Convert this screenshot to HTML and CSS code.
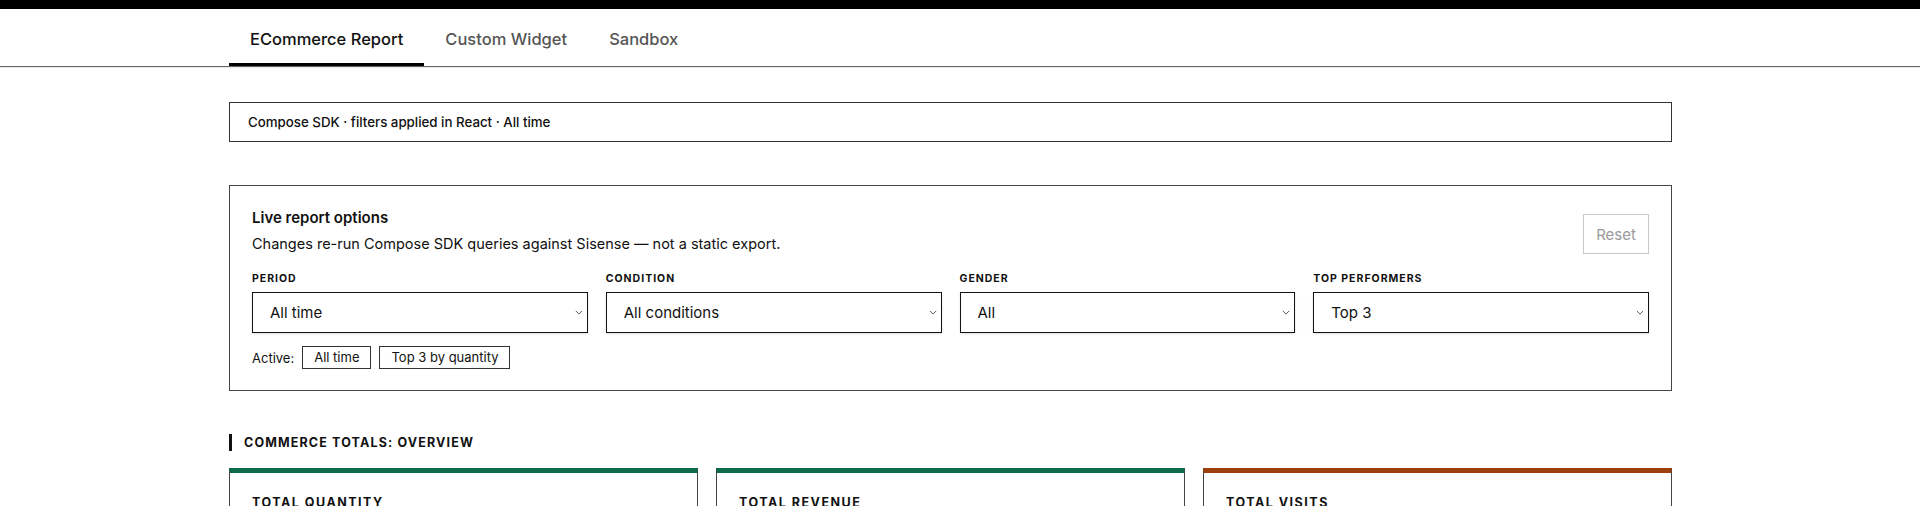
FILE: index.html
```html
<!DOCTYPE html>
<html lang="en">
<head>
    <meta charset="UTF-8">
    <meta name="viewport" content="width=device-width, initial-scale=1.0">
    <title>ECommerce Report</title>
    <link rel="stylesheet" href="styles.css">
</head>
<body>
    <div class="topbar"></div>

    <nav class="tabs">
        <div class="tabs-inner">
            <a class="tab active" href="#">ECommerce Report</a>
            <a class="tab" href="#">Custom Widget</a>
            <a class="tab" href="#">Sandbox</a>
        </div>
    </nav>

    <main class="page">
        <div class="context-bar">Compose SDK · filters applied in React · All time</div>

        <section class="options">
            <div class="options-head">
                <div>
                    <h2 class="options-title">Live report options</h2>
                    <p class="options-sub">Changes re-run Compose SDK queries against Sisense — not a static export.</p>
                </div>
                <button class="reset" disabled>Reset</button>
            </div>

            <div class="filters">
                <label class="field">
                    <span class="field-label">Period</span>
                    <span class="select-wrap">
                        <select>
                            <option>All time</option>
                            <option>Last 12 months</option>
                            <option>Last 30 days</option>
                        </select>
                        <svg class="chevron" viewBox="0 0 10 6"><path d="M1 1l4 4 4-4"/></svg>
                    </span>
                </label>
                <label class="field">
                    <span class="field-label">Condition</span>
                    <span class="select-wrap">
                        <select>
                            <option>All conditions</option>
                            <option>New</option>
                            <option>Used</option>
                        </select>
                        <svg class="chevron" viewBox="0 0 10 6"><path d="M1 1l4 4 4-4"/></svg>
                    </span>
                </label>
                <label class="field">
                    <span class="field-label">Gender</span>
                    <span class="select-wrap">
                        <select>
                            <option>All</option>
                            <option>Female</option>
                            <option>Male</option>
                        </select>
                        <svg class="chevron" viewBox="0 0 10 6"><path d="M1 1l4 4 4-4"/></svg>
                    </span>
                </label>
                <label class="field">
                    <span class="field-label">Top performers</span>
                    <span class="select-wrap">
                        <select>
                            <option>Top 3</option>
                            <option>Top 5</option>
                            <option>Top 10</option>
                        </select>
                        <svg class="chevron" viewBox="0 0 10 6"><path d="M1 1l4 4 4-4"/></svg>
                    </span>
                </label>
            </div>

            <div class="active-row">
                <span>Active:</span>
                <span class="chip">All time</span>
                <span class="chip">Top 3 by quantity</span>
            </div>
        </section>

        <h3 class="section-title">Commerce totals: overview</h3>

        <div class="kpis">
            <div class="kpi green">
                <div class="kpi-label">Total quantity</div>
            </div>
            <div class="kpi green">
                <div class="kpi-label">Total revenue</div>
            </div>
            <div class="kpi brown">
                <div class="kpi-label">Total visits</div>
            </div>
        </div>
    </main>
</body>
</html>
```

FILE: styles.css
```css
body {
    margin: 0;
    font-family: 'Inter', 'Liberation Sans', sans-serif;
    color: #111;
    background: #fff;
}
.topbar {
    height: 9px;
    background: #000;
}
.tabs {
    border-bottom: 1px solid #666;
    box-shadow: 0 1px 1px rgba(0, 0, 0, 0.08);
}
.tabs-inner {
    display: flex;
    margin-left: 229px;
    height: 57px;
}
.tab {
    display: flex;
    align-items: center;
    padding: 6px 21px 0;
    font-size: 16.5px;
    font-weight: 500;
    color: #555;
    text-decoration: none;
    border-bottom: 3px solid transparent;
}
.tab.active {
    color: #111;
    border-bottom-color: #000;
}
.page {
    width: 1443px;
    margin-left: 229px;
}
.context-bar {
    margin-top: 35px;
    border: 1px solid #333;
    padding: 11px 18px;
    font-size: 13.3px;
    font-weight: 500;
    line-height: 16px;
}
.options {
    margin-top: 43px;
    border: 1px solid #444;
    padding: 22px 22px 21px;
}
.options-head {
    display: flex;
    justify-content: space-between;
    align-items: flex-start;
}
.options-title {
    margin: 0;
    font-size: 15px;
    font-weight: 600;
    line-height: 20px;
}
.options-sub {
    margin: 6px 0 0;
    font-size: 14.5px;
    line-height: 20px;
}
.reset {
    margin-top: 6px;
    width: 66px;
    height: 40px;
    background: #fff;
    border: 1px solid #c8c8c8;
    color: #9a9a9a;
    font-family: inherit;
    font-size: 15px;
}
.filters {
    display: grid;
    grid-template-columns: repeat(4, 1fr);
    gap: 18px;
    margin-top: 18px;
}
.field {
    display: flex;
    flex-direction: column;
    gap: 6px;
}
.field-label {
    font-size: 10.5px;
    font-weight: 700;
    line-height: 14px;
    letter-spacing: 1px;
    text-transform: uppercase;
}
.select-wrap {
    position: relative;
    display: block;
}
.select-wrap select {
    width: 100%;
    height: 41px;
    padding: 0 24px 0 17px;
    border: 1px solid #111;
    border-radius: 0;
    background: #fff;
    color: #111;
    font-family: inherit;
    font-size: 15px;
    box-shadow: 0 1px 2px rgba(0, 0, 0, 0.12);
    appearance: none;
    -webkit-appearance: none;
}
.chevron {
    position: absolute;
    right: 5px;
    top: 18px;
    width: 8px;
    height: 5px;
    fill: none;
    stroke: #333;
    stroke-width: 1;
    pointer-events: none;
}
.active-row {
    display: flex;
    align-items: center;
    gap: 8px;
    margin-top: 13px;
    font-size: 13px;
}
.chip {
    border: 1px solid #333;
    padding: 3px 11px;
    line-height: 15px;
}
.section-title {
    margin: 43px 0 17px;
    border-left: 3px solid #111;
    padding-left: 12px;
    font-size: 12.5px;
    font-weight: 700;
    line-height: 17px;
    letter-spacing: 1.15px;
    text-transform: uppercase;
}
.kpis {
    display: grid;
    grid-template-columns: repeat(3, 1fr);
    gap: 18px;
}
.kpi {
    border: 1px solid #444;
    border-top: 5px solid #0d6a4c;
    padding: 22px 22px 40px;
    min-height: 120px;
}
.kpi.brown { border-top-color: #9c400b; }
.kpi-label {
    font-size: 12.5px;
    font-weight: 700;
    letter-spacing: 1.5px;
    text-transform: uppercase;
}
```
